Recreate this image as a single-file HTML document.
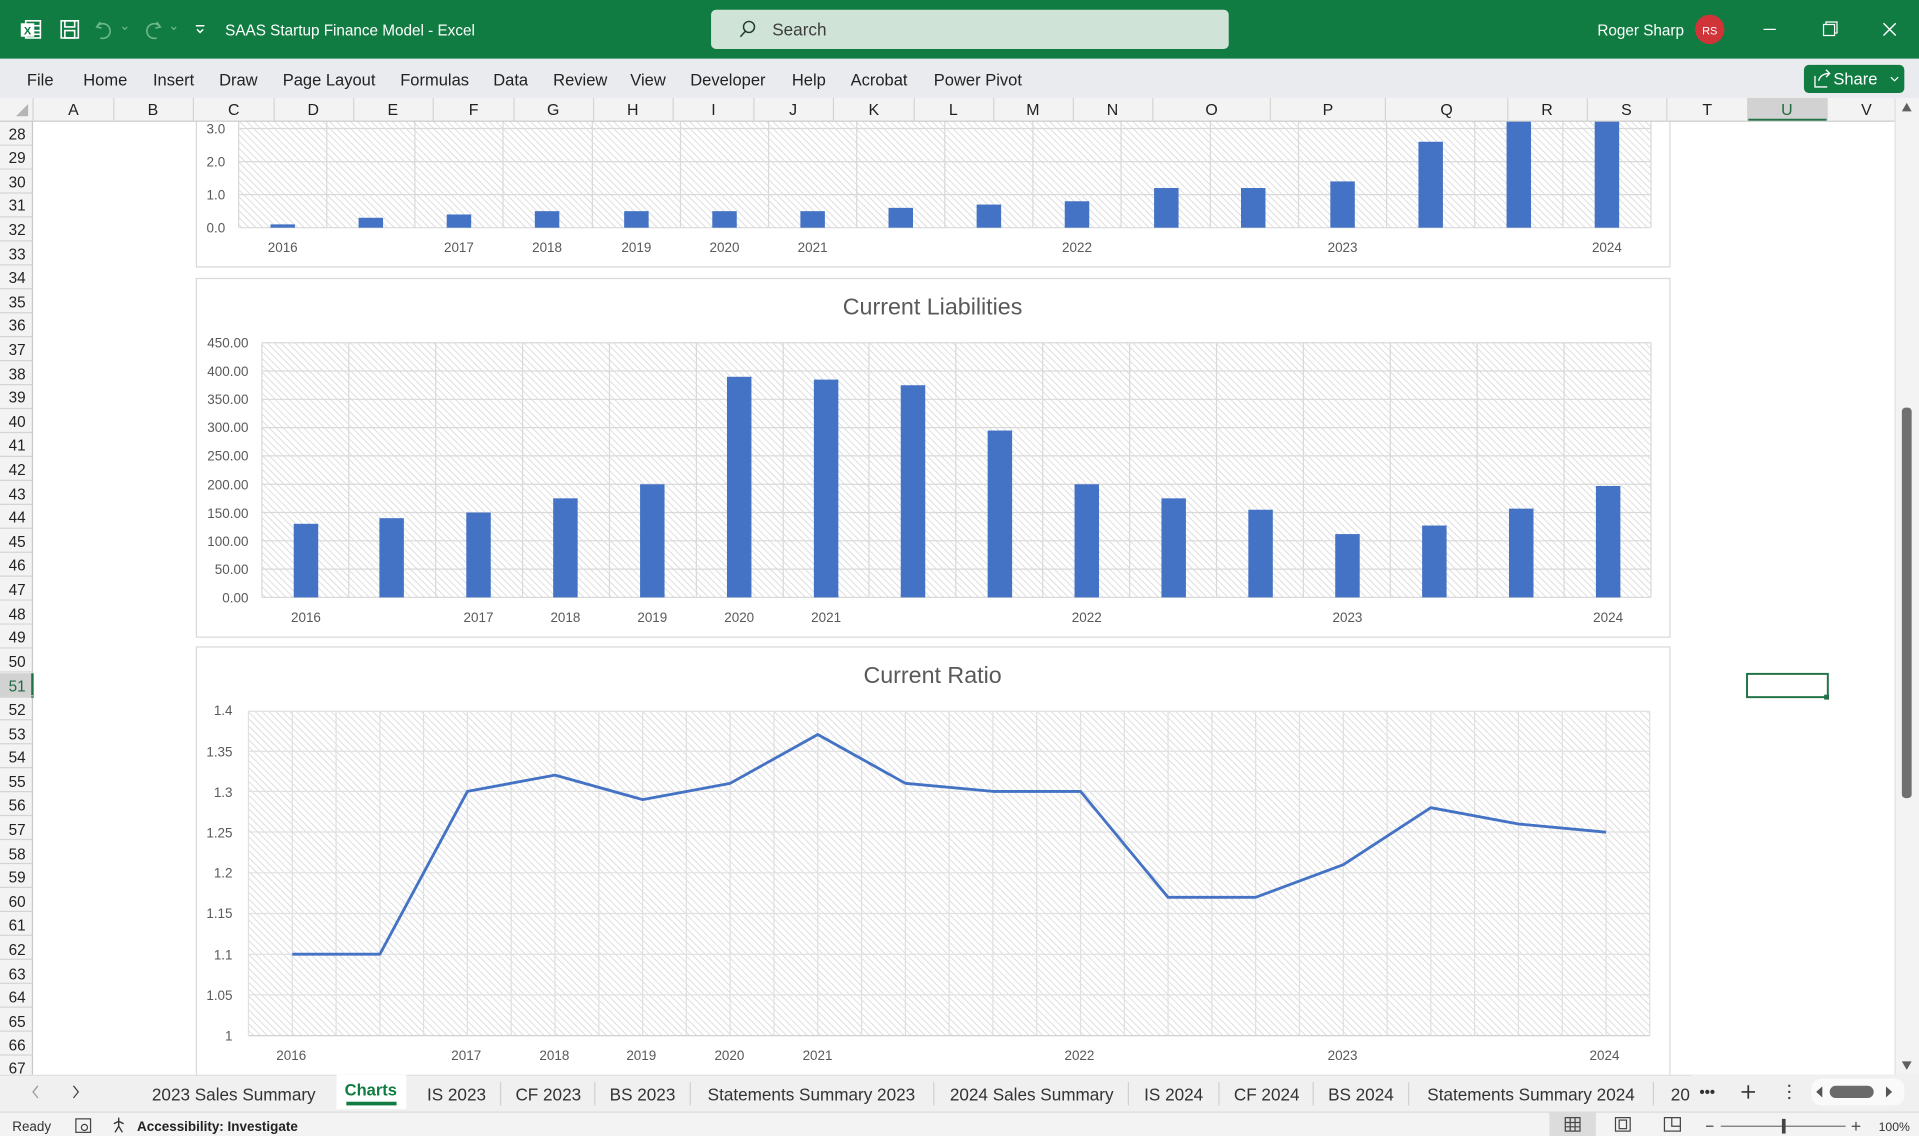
<!DOCTYPE html>
<html><head><meta charset="utf-8"><style>
html,body{margin:0;padding:0;background:#fff;overflow:hidden}
svg{display:block}
text{font-family:"Liberation Sans","DejaVu Sans",sans-serif}
</style></head><body>
<svg width="1919" height="1136" viewBox="0 0 1568 928" preserveAspectRatio="none" xmlns="http://www.w3.org/2000/svg">
<defs>
<pattern id="h" width="4" height="4" patternUnits="userSpaceOnUse" patternTransform="rotate(-45)">
<rect width="4" height="4" fill="#fff"/><line x1="0" y1="0" x2="0" y2="4" stroke="#d6d6d6" stroke-width="1.3"/>
</pattern>
</defs>
<rect width="1568" height="928" fill="#fff"/>

<!-- CHART 1 (partial) -->
<rect x="160.5" y="85" width="1204" height="133" fill="#fff" stroke="#d9d9d9"/>
<rect x="195" y="85" width="1154" height="101" fill="url(#h)"/>
<g stroke="#d9d9d9" stroke-width="1">
<line x1="195" y1="105" x2="1349" y2="105"/><line x1="195" y1="132" x2="1349" y2="132"/><line x1="195" y1="159" x2="1349" y2="159"/><line x1="195" y1="186" x2="1349" y2="186"/>
<line x1="195" y1="85" x2="195" y2="186"/><line x1="267" y1="85" x2="267" y2="186"/><line x1="339" y1="85" x2="339" y2="186"/><line x1="411" y1="85" x2="411" y2="186"/><line x1="484" y1="85" x2="484" y2="186"/><line x1="556" y1="85" x2="556" y2="186"/><line x1="628" y1="85" x2="628" y2="186"/><line x1="700" y1="85" x2="700" y2="186"/><line x1="772" y1="85" x2="772" y2="186"/><line x1="844" y1="85" x2="844" y2="186"/><line x1="916" y1="85" x2="916" y2="186"/><line x1="989" y1="85" x2="989" y2="186"/><line x1="1061" y1="85" x2="1061" y2="186"/><line x1="1133" y1="85" x2="1133" y2="186"/><line x1="1205" y1="85" x2="1205" y2="186"/><line x1="1277" y1="85" x2="1277" y2="186"/><line x1="1349" y1="85" x2="1349" y2="186"/>
</g>
<g fill="#4472c4">
<rect x="221" y="183.3" width="20" height="2.7"/><rect x="293" y="177.9" width="20" height="8.1"/><rect x="365" y="175.2" width="20" height="10.8"/><rect x="437" y="172.5" width="20" height="13.5"/><rect x="510" y="172.5" width="20" height="13.5"/><rect x="582" y="172.5" width="20" height="13.5"/><rect x="654" y="172.5" width="20" height="13.5"/><rect x="726" y="169.8" width="20" height="16.2"/><rect x="798" y="167.1" width="20" height="18.9"/><rect x="870" y="164.4" width="20" height="21.6"/><rect x="943" y="153.6" width="20" height="32.4"/><rect x="1014" y="153.6" width="20" height="32.4"/><rect x="1087" y="148.2" width="20" height="37.8"/><rect x="1159" y="115.8" width="20" height="70.2"/><rect x="1231" y="85" width="20" height="101"/><rect x="1303" y="85" width="20" height="101"/>
</g>
<g fill="#595959" font-size="11" text-anchor="end">
<text x="184" y="109">3.0</text><text x="184" y="136">2.0</text><text x="184" y="163">1.0</text><text x="184" y="190">0.0</text>
</g>
<g fill="#595959" font-size="11" text-anchor="middle">
<text x="231" y="206">2016</text><text x="375" y="206">2017</text><text x="447" y="206">2018</text><text x="520" y="206">2019</text><text x="592" y="206">2020</text><text x="664" y="206">2021</text><text x="880" y="206">2022</text><text x="1097" y="206">2023</text><text x="1313" y="206">2024</text>
</g>

<!-- CHART 2 -->
<rect x="160.5" y="227.5" width="1204" height="293" fill="#fff" stroke="#d9d9d9"/>
<text x="762" y="257" font-size="19" fill="#595959" text-anchor="middle">Current Liabilities</text>
<rect x="214" y="280" width="1135" height="208" fill="url(#h)"/>
<g stroke="#d9d9d9">
<line x1="214" y1="280" x2="1349" y2="280"/><line x1="214" y1="303.1" x2="1349" y2="303.1"/><line x1="214" y1="326.2" x2="1349" y2="326.2"/><line x1="214" y1="349.3" x2="1349" y2="349.3"/><line x1="214" y1="372.4" x2="1349" y2="372.4"/><line x1="214" y1="395.6" x2="1349" y2="395.6"/><line x1="214" y1="418.7" x2="1349" y2="418.7"/><line x1="214" y1="441.8" x2="1349" y2="441.8"/><line x1="214" y1="464.9" x2="1349" y2="464.9"/><line x1="214" y1="488" x2="1349" y2="488"/>
<line x1="214" y1="280" x2="214" y2="488"/><line x1="285" y1="280" x2="285" y2="488"/><line x1="356" y1="280" x2="356" y2="488"/><line x1="427" y1="280" x2="427" y2="488"/><line x1="498" y1="280" x2="498" y2="488"/><line x1="569" y1="280" x2="569" y2="488"/><line x1="640" y1="280" x2="640" y2="488"/><line x1="710" y1="280" x2="710" y2="488"/><line x1="781" y1="280" x2="781" y2="488"/><line x1="852" y1="280" x2="852" y2="488"/><line x1="923" y1="280" x2="923" y2="488"/><line x1="994" y1="280" x2="994" y2="488"/><line x1="1065" y1="280" x2="1065" y2="488"/><line x1="1136" y1="280" x2="1136" y2="488"/><line x1="1207" y1="280" x2="1207" y2="488"/><line x1="1278" y1="280" x2="1278" y2="488"/><line x1="1349" y1="280" x2="1349" y2="488"/>
</g>
<g fill="#4472c4">
<rect x="240" y="427.9" width="20" height="60.1"/><rect x="310" y="423.3" width="20" height="64.7"/><rect x="381" y="418.7" width="20" height="69.3"/><rect x="452" y="407.1" width="20" height="80.9"/><rect x="523" y="395.6" width="20" height="92.4"/><rect x="594" y="307.8" width="20" height="180.2"/><rect x="665" y="310.1" width="20" height="177.9"/><rect x="736" y="314.7" width="20" height="173.3"/><rect x="807" y="351.7" width="20" height="136.3"/><rect x="878" y="395.6" width="20" height="92.4"/><rect x="949" y="407.1" width="20" height="80.9"/><rect x="1020" y="416.4" width="20" height="71.6"/><rect x="1091" y="436.3" width="20" height="51.7"/><rect x="1162" y="429.3" width="20" height="58.7"/><rect x="1233" y="415.5" width="20" height="72.5"/><rect x="1304" y="397" width="20" height="91"/>
</g>
<g fill="#595959" font-size="11" text-anchor="end">
<text x="203" y="284">450.00</text><text x="203" y="307">400.00</text><text x="203" y="330">350.00</text><text x="203" y="353">300.00</text><text x="203" y="376">250.00</text><text x="203" y="400">200.00</text><text x="203" y="423">150.00</text><text x="203" y="446">100.00</text><text x="203" y="469">50.00</text><text x="203" y="492">0.00</text>
</g>
<g fill="#595959" font-size="11" text-anchor="middle">
<text x="250" y="508">2016</text><text x="391" y="508">2017</text><text x="462" y="508">2018</text><text x="533" y="508">2019</text><text x="604" y="508">2020</text><text x="675" y="508">2021</text><text x="888" y="508">2022</text><text x="1101" y="508">2023</text><text x="1314" y="508">2024</text>
</g>

<!-- CHART 3 -->
<rect x="160.5" y="528.5" width="1204" height="360" fill="#fff" stroke="#d9d9d9"/>
<text x="762" y="558" font-size="19" fill="#595959" text-anchor="middle">Current Ratio</text>
<rect x="203" y="581" width="1145" height="265" fill="url(#h)"/>
<g stroke="#e0e0e0">
<line x1="203" y1="581" x2="1348" y2="581"/><line x1="203" y1="613.7" x2="1348" y2="613.7"/><line x1="203" y1="646.5" x2="1348" y2="646.5"/><line x1="203" y1="679.7" x2="1348" y2="679.7"/><line x1="203" y1="713" x2="1348" y2="713"/><line x1="203" y1="746.2" x2="1348" y2="746.2"/><line x1="203" y1="779.5" x2="1348" y2="779.5"/><line x1="203" y1="812.7" x2="1348" y2="812.7"/>
</g>
<g stroke="#e0e0e0">
<line x1="203" y1="581" x2="203" y2="846"/><line x1="238.8" y1="581" x2="238.8" y2="846"/><line x1="274.6" y1="581" x2="274.6" y2="846"/><line x1="310.4" y1="581" x2="310.4" y2="846"/><line x1="346.1" y1="581" x2="346.1" y2="846"/><line x1="381.9" y1="581" x2="381.9" y2="846"/><line x1="417.7" y1="581" x2="417.7" y2="846"/><line x1="453.5" y1="581" x2="453.5" y2="846"/><line x1="489.3" y1="581" x2="489.3" y2="846"/><line x1="525.1" y1="581" x2="525.1" y2="846"/><line x1="560.8" y1="581" x2="560.8" y2="846"/><line x1="596.6" y1="581" x2="596.6" y2="846"/><line x1="632.4" y1="581" x2="632.4" y2="846"/><line x1="668.2" y1="581" x2="668.2" y2="846"/><line x1="704" y1="581" x2="704" y2="846"/><line x1="739.8" y1="581" x2="739.8" y2="846"/><line x1="775.5" y1="581" x2="775.5" y2="846"/><line x1="811.3" y1="581" x2="811.3" y2="846"/><line x1="847.1" y1="581" x2="847.1" y2="846"/><line x1="882.9" y1="581" x2="882.9" y2="846"/><line x1="918.7" y1="581" x2="918.7" y2="846"/><line x1="954.4" y1="581" x2="954.4" y2="846"/><line x1="990.2" y1="581" x2="990.2" y2="846"/><line x1="1026" y1="581" x2="1026" y2="846"/><line x1="1061.8" y1="581" x2="1061.8" y2="846"/><line x1="1097.6" y1="581" x2="1097.6" y2="846"/><line x1="1133.4" y1="581" x2="1133.4" y2="846"/><line x1="1169.1" y1="581" x2="1169.1" y2="846"/><line x1="1204.9" y1="581" x2="1204.9" y2="846"/><line x1="1240.7" y1="581" x2="1240.7" y2="846"/><line x1="1276.5" y1="581" x2="1276.5" y2="846"/><line x1="1312.3" y1="581" x2="1312.3" y2="846"/><line x1="1348" y1="581" x2="1348" y2="846"/>
</g>
<line x1="203" y1="846" x2="1348" y2="846" stroke="#d0d0d0"/>
<polyline fill="none" stroke="#4472c4" stroke-width="2.3" stroke-linejoin="round" points="238.8,779.5 310.4,779.5 381.9,646.5 453.5,633.2 525.1,653.2 596.6,639.9 668.2,600 739.8,639.9 811.3,646.5 882.9,646.5 954.4,733 1026,733 1097.6,706.4 1169.1,659.8 1240.7,673.1 1312.3,679.8"/>
<g fill="#595959" font-size="11" text-anchor="end">
<text x="190" y="584">1.4</text><text x="190" y="618">1.35</text><text x="190" y="651">1.3</text><text x="190" y="684">1.25</text><text x="190" y="717">1.2</text><text x="190" y="750">1.15</text><text x="190" y="784">1.1</text><text x="190" y="817">1.05</text><text x="190" y="850">1</text>
</g>
<g fill="#595959" font-size="11" text-anchor="middle">
<text x="238" y="866">2016</text><text x="381" y="866">2017</text><text x="453" y="866">2018</text><text x="524" y="866">2019</text><text x="596" y="866">2020</text><text x="668" y="866">2021</text><text x="882" y="866">2022</text><text x="1097" y="866">2023</text><text x="1311" y="866">2024</text>
</g>

<!-- selected cell -->
<rect x="1427.5" y="550.5" width="66" height="19" fill="none" stroke="#217346" stroke-width="1.6"/>
<rect x="1490.5" y="567.5" width="4" height="4" fill="#217346"/>

<!-- row headers -->
<rect x="0" y="99" width="27" height="779" fill="#f3f3f3"/>
<rect x="0" y="550" width="27" height="20" fill="#d2d2d2"/>
<line x1="26.5" y1="99" x2="26.5" y2="878" stroke="#c8c8c8"/>
<line x1="26.5" y1="550" x2="26.5" y2="570" stroke="#217346" stroke-width="2"/>
<g stroke="#d4d4d4">
<line x1="0" y1="118.6" x2="27" y2="118.6"/><line x1="0" y1="138.1" x2="27" y2="138.1"/><line x1="0" y1="157.7" x2="27" y2="157.7"/><line x1="0" y1="177.2" x2="27" y2="177.2"/><line x1="0" y1="196.8" x2="27" y2="196.8"/><line x1="0" y1="216.4" x2="27" y2="216.4"/><line x1="0" y1="235.9" x2="27" y2="235.9"/><line x1="0" y1="255.5" x2="27" y2="255.5"/><line x1="0" y1="275" x2="27" y2="275"/><line x1="0" y1="294.6" x2="27" y2="294.6"/><line x1="0" y1="314.2" x2="27" y2="314.2"/><line x1="0" y1="333.7" x2="27" y2="333.7"/><line x1="0" y1="353.3" x2="27" y2="353.3"/><line x1="0" y1="372.8" x2="27" y2="372.8"/><line x1="0" y1="392.4" x2="27" y2="392.4"/><line x1="0" y1="412" x2="27" y2="412"/><line x1="0" y1="431.5" x2="27" y2="431.5"/><line x1="0" y1="451.1" x2="27" y2="451.1"/><line x1="0" y1="470.6" x2="27" y2="470.6"/><line x1="0" y1="490.2" x2="27" y2="490.2"/><line x1="0" y1="509.8" x2="27" y2="509.8"/><line x1="0" y1="529.3" x2="27" y2="529.3"/><line x1="0" y1="548.9" x2="27" y2="548.9"/><line x1="0" y1="568.4" x2="27" y2="568.4"/><line x1="0" y1="588" x2="27" y2="588"/><line x1="0" y1="607.6" x2="27" y2="607.6"/><line x1="0" y1="627.1" x2="27" y2="627.1"/><line x1="0" y1="646.7" x2="27" y2="646.7"/><line x1="0" y1="666.2" x2="27" y2="666.2"/><line x1="0" y1="685.8" x2="27" y2="685.8"/><line x1="0" y1="705.4" x2="27" y2="705.4"/><line x1="0" y1="724.9" x2="27" y2="724.9"/><line x1="0" y1="744.5" x2="27" y2="744.5"/><line x1="0" y1="764" x2="27" y2="764"/><line x1="0" y1="783.6" x2="27" y2="783.6"/><line x1="0" y1="803.2" x2="27" y2="803.2"/><line x1="0" y1="822.7" x2="27" y2="822.7"/><line x1="0" y1="842.3" x2="27" y2="842.3"/><line x1="0" y1="861.8" x2="27" y2="861.8"/>
</g>
<g fill="#222" font-size="12.5" text-anchor="middle">
<text x="14" y="114">28</text><text x="14" y="133">29</text><text x="14" y="153">30</text><text x="14" y="172">31</text><text x="14" y="192">32</text><text x="14" y="212">33</text><text x="14" y="231">34</text><text x="14" y="251">35</text><text x="14" y="270">36</text><text x="14" y="290">37</text><text x="14" y="310">38</text><text x="14" y="329">39</text><text x="14" y="349">40</text><text x="14" y="368">41</text><text x="14" y="388">42</text><text x="14" y="408">43</text><text x="14" y="427">44</text><text x="14" y="447">45</text><text x="14" y="466">46</text><text x="14" y="486">47</text><text x="14" y="506">48</text><text x="14" y="525">49</text><text x="14" y="545">50</text><text x="14" y="565" fill="#1e6b41">51</text><text x="14" y="584">52</text><text x="14" y="604">53</text><text x="14" y="623">54</text><text x="14" y="643">55</text><text x="14" y="662">56</text><text x="14" y="682">57</text><text x="14" y="702">58</text><text x="14" y="721">59</text><text x="14" y="741">60</text><text x="14" y="760">61</text><text x="14" y="780">62</text><text x="14" y="800">63</text><text x="14" y="819">64</text><text x="14" y="839">65</text><text x="14" y="858">66</text><text x="14" y="877">67</text>
</g>

<!-- column headers -->
<rect x="0" y="80" width="1548" height="19" fill="#f3f3f3"/>
<rect x="1428" y="80" width="65" height="19" fill="#d2d2d2"/>
<line x1="1428" y1="98" x2="1493" y2="98" stroke="#217346" stroke-width="2"/>
<line x1="0" y1="99" x2="1548" y2="99" stroke="#c8c8c8"/>
<polygon points="23,85 23,95 13,95" fill="#b5b5b5"/>
<g stroke="#d4d4d4">
<line x1="27" y1="80" x2="27" y2="99"/><line x1="93" y1="80" x2="93" y2="99"/><line x1="158" y1="80" x2="158" y2="99"/><line x1="224" y1="80" x2="224" y2="99"/><line x1="289" y1="80" x2="289" y2="99"/><line x1="354" y1="80" x2="354" y2="99"/><line x1="420" y1="80" x2="420" y2="99"/><line x1="485" y1="80" x2="485" y2="99"/><line x1="550" y1="80" x2="550" y2="99"/><line x1="616" y1="80" x2="616" y2="99"/><line x1="681" y1="80" x2="681" y2="99"/><line x1="747" y1="80" x2="747" y2="99"/><line x1="812" y1="80" x2="812" y2="99"/><line x1="877" y1="80" x2="877" y2="99"/><line x1="942" y1="80" x2="942" y2="99"/><line x1="1038" y1="80" x2="1038" y2="99"/><line x1="1132" y1="80" x2="1132" y2="99"/><line x1="1232" y1="80" x2="1232" y2="99"/><line x1="1297" y1="80" x2="1297" y2="99"/><line x1="1362" y1="80" x2="1362" y2="99"/><line x1="1428" y1="80" x2="1428" y2="99"/><line x1="1493" y1="80" x2="1493" y2="99"/>
</g>
<g fill="#222" font-size="13" text-anchor="middle">
<text x="60" y="94">A</text><text x="125" y="94">B</text><text x="191" y="94">C</text><text x="256" y="94">D</text><text x="321" y="94">E</text><text x="387" y="94">F</text><text x="452" y="94">G</text><text x="517" y="94">H</text><text x="583" y="94">I</text><text x="648" y="94">J</text><text x="714" y="94">K</text><text x="779" y="94">L</text><text x="844" y="94">M</text><text x="909" y="94">N</text><text x="990" y="94">O</text><text x="1085" y="94">P</text><text x="1182" y="94">Q</text><text x="1264" y="94">R</text><text x="1329" y="94">S</text><text x="1395" y="94">T</text><text x="1460" y="94" fill="#1e6b41">U</text><text x="1525" y="94">V</text>
</g>

<!-- vertical scrollbar -->
<rect x="1548" y="80" width="20" height="798" fill="#f3f3f3"/>
<line x1="1548.5" y1="80" x2="1548.5" y2="878" stroke="#e0e0e0"/>
<rect x="1554" y="333" width="8" height="319" rx="3" fill="#707070"/>
<polygon points="1558,84 1562,91 1554,91" fill="#606060"/>
<polygon points="1558,874 1562,867 1554,867" fill="#606060"/>

<!-- title bar -->
<rect x="0" y="0" width="1568" height="48" fill="#107c41"/>
<g fill="none" stroke="#fff" stroke-width="1.3">
<rect x="21" y="17" width="12" height="14"/><line x1="27" y1="21" x2="33" y2="21"/><line x1="27" y1="25" x2="33" y2="25"/><line x1="27" y1="28" x2="33" y2="28"/>
<rect x="50" y="17" width="14" height="14"/><rect x="53" y="17" width="8" height="5"/><rect x="53" y="25" width="8" height="6"/>
</g>
<rect x="17" y="19" width="11" height="11" fill="#fff"/>
<text x="22.5" y="28" font-size="9" font-weight="bold" fill="#107c41" text-anchor="middle">X</text>
<g fill="none" stroke="#6fb890" stroke-width="1.3">
<path d="M82 18 l-3 4 4 1 M79 22 a6 6 0 1 1 3 9"/><path d="M100 22 l2 2 2-2" stroke-width="1"/>
<path d="M128 18 l3 4 -4 1 M131 22 a6 6 0 1 0 -3 9"/><path d="M140 22 l2 2 2-2" stroke-width="1"/>
</g>
<path d="M160 21 h7 M161 24 l2.5 2.5 2.5-2.5" fill="none" stroke="#fff" stroke-width="1.2"/>
<text x="184" y="29" font-size="12.5" fill="#fff">SAAS Startup Finance Model  -  Excel</text>
<rect x="581" y="8" width="423" height="32" rx="4" fill="#cfe4d7"/>
<circle cx="612" cy="22" r="4.5" fill="none" stroke="#1f3b2c" stroke-width="1.2"/><line x1="609" y1="25.5" x2="605" y2="30" stroke="#1f3b2c" stroke-width="1.2"/>
<text x="631" y="29" font-size="14" fill="#3b3b3b">Search</text>
<text x="1376" y="29" font-size="12.5" fill="#fff" text-anchor="end">Roger Sharp</text>
<circle cx="1397" cy="24" r="12" fill="#d13438"/>
<text x="1397" y="28" font-size="9" fill="#fff" text-anchor="middle">RS</text>
<line x1="1441" y1="24" x2="1451" y2="24" stroke="#fff"/>
<rect x="1490" y="20" width="9" height="9" fill="none" stroke="#fff"/><path d="M1492 20 v-2 h9 v9 h-2" fill="none" stroke="#fff"/>
<path d="M1539 19 l10 10 M1549 19 l-10 10" stroke="#fff" stroke-width="1.2"/>

<!-- ribbon tabs -->
<rect x="0" y="48" width="1568" height="32" fill="#e9ebee"/>
<g font-size="13.5" fill="#222">
<text x="22" y="70">File</text><text x="68" y="70">Home</text><text x="125" y="70">Insert</text><text x="179" y="70">Draw</text><text x="231" y="70">Page Layout</text><text x="327" y="70">Formulas</text><text x="403" y="70">Data</text><text x="452" y="70">Review</text><text x="515" y="70">View</text><text x="564" y="70">Developer</text><text x="647" y="70">Help</text><text x="695" y="70">Acrobat</text><text x="763" y="70">Power Pivot</text>
</g>
<rect x="1474" y="53" width="82" height="23" rx="4" fill="#107c41"/>
<path d="M1483 62 v9 h10 M1486 66 c1-4 4-6 9-6 M1492 57 l3 3 -3 3" fill="none" stroke="#fff" stroke-width="1.1"/>
<text x="1498" y="69" font-size="13.5" fill="#fff">Share</text>
<path d="M1545 63 l3 3 3-3" fill="none" stroke="#fff"/>

<!-- sheet tabs -->
<rect x="0" y="878" width="1568" height="30" fill="#f0f0f0"/>
<line x1="0" y1="878.5" x2="1568" y2="878.5" stroke="#e0e0e0"/>
<path d="M31 887 l-4 5 4 5" fill="none" stroke="#999"/><path d="M60 887 l4 5 -4 5" fill="none" stroke="#444"/>
<rect x="275" y="878" width="57" height="28" fill="#fff"/>
<rect x="283" y="900" width="41" height="3" fill="#107c41"/>
<g font-size="14" fill="#333" text-anchor="middle">
<text x="191" y="899">2023 Sales Summary</text><text x="303" y="895" font-weight="bold" fill="#107c41" font-size="13.5">Charts</text><text x="373" y="899">IS 2023</text><text x="448" y="899">CF 2023</text><text x="525" y="899">BS 2023</text><text x="663" y="899">Statements Summary 2023</text><text x="843" y="899">2024 Sales Summary</text><text x="959" y="899">IS 2024</text><text x="1035" y="899">CF 2024</text><text x="1112" y="899">BS 2024</text><text x="1251" y="899">Statements Summary 2024</text><text x="1373" y="899">20</text>
</g>
<g stroke="#d0d0d0">
<line x1="409" y1="884" x2="409" y2="903"/><line x1="486" y1="884" x2="486" y2="903"/><line x1="564" y1="884" x2="564" y2="903"/><line x1="763" y1="884" x2="763" y2="903"/><line x1="922" y1="884" x2="922" y2="903"/><line x1="996" y1="884" x2="996" y2="903"/><line x1="1073" y1="884" x2="1073" y2="903"/><line x1="1151" y1="884" x2="1151" y2="903"/><line x1="1351" y1="884" x2="1351" y2="903"/>
</g>
<rect x="1382" y="878" width="186" height="30" fill="#f0f0f0"/>
<text x="1395" y="896" font-size="12" fill="#333" text-anchor="middle" font-weight="bold">•••</text>
<path d="M1423 892 h11 M1428.5 886.5 v11" stroke="#333" stroke-width="1.4"/>
<g fill="#444"><circle cx="1462" cy="887" r="1"/><circle cx="1462" cy="892" r="1"/><circle cx="1462" cy="897" r="1"/></g>
<rect x="1480" y="881" width="76" height="22" rx="8" fill="#fafafa"/>
<rect x="1495" y="887" width="36" height="10" rx="5" fill="#6a6a6a"/>
<polygon points="1484,892 1489,887.5 1489,896.5" fill="#555"/><polygon points="1546,892 1541,887.5 1541,896.5" fill="#555"/>

<!-- status bar -->
<rect x="0" y="908" width="1568" height="20" fill="#f3f3f3"/>
<line x1="0" y1="908.5" x2="1568" y2="908.5" stroke="#dcdcdc"/>
<text x="10" y="924" font-size="11" fill="#333">Ready</text>
<rect x="62" y="914" width="12" height="11" fill="none" stroke="#444"/><circle cx="69" cy="921" r="2.5" fill="none" stroke="#444"/>
<path d="M97 913 v3 M93 918 l4 -2 4 2 M97 916 v4 l-3 5 M97 920 l3 5" fill="none" stroke="#333" stroke-width="1.1"/>
<text x="112" y="924" font-size="11" font-weight="bold" fill="#222">Accessibility: Investigate</text>
<rect x="1266" y="908" width="38" height="20" fill="#dcdcdc"/>
<g fill="none" stroke="#444">
<rect x="1279" y="913" width="12" height="11"/><path d="M1279 917 h12 M1279 920.5 h12 M1283 913 v11 M1287 913 v11"/>
<rect x="1320" y="913" width="12" height="11"/><rect x="1323" y="915" width="6" height="7"/>
<rect x="1360" y="913" width="13" height="11"/><path d="M1366 913 v7 h7"/>
</g>
<line x1="1394" y1="920" x2="1400" y2="920" stroke="#444"/>
<line x1="1406" y1="920" x2="1508" y2="920" stroke="#777"/>
<rect x="1456" y="914" width="3" height="12" fill="#444"/>
<path d="M1513 920 h7 M1516.5 916.5 v7" stroke="#444"/>
<text x="1535" y="924" font-size="10" fill="#333">100%</text>
</svg>
</body></html>
